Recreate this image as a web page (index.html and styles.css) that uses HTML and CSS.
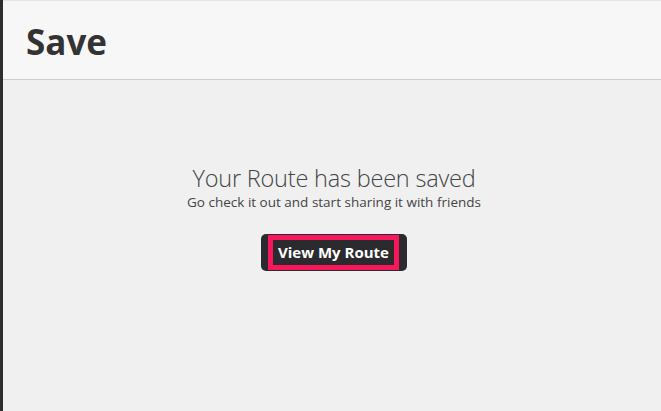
FILE: index.html
```html
<!DOCTYPE html>
<html lang="en">
<head>
    <meta charset="UTF-8">
    <meta name="viewport" content="width=device-width, initial-scale=1.0">
    <title>Save</title>
    <link rel="stylesheet" href="styles.css">
</head>
<body>

<div class="edge"></div>

<div class="panel">
    <header class="panel-header">
        <h1>Save</h1>
    </header>

    <main class="panel-body">
        <h2>Your Route has been saved</h2>
        <p>Go check it out and start sharing it with friends</p>

        <button class="route-btn"><span>View My Route</span></button>
    </main>
</div>

</body>
</html>
```

FILE: styles.css
```css
* {
    margin: 0;
    padding: 0;
    box-sizing: border-box;
}

body {
    font-family: 'Open Sans', sans-serif;
    background-color: #f0f0f0;
    color: #333;
    display: flex;
    height: 100vh;
    overflow: hidden;
}

.edge {
    width: 3px;
    background-color: #2f2e2c;
}

.panel {
    flex: 1;
    display: flex;
    flex-direction: column;
    border-top: 1px solid #e4e4ea;
}

.panel-header {
    height: 79px;
    background-color: #f7f7f7;
    border-bottom: 1px solid #cdcdcd;
    padding: 17px 0 0 23px;
}

h1 {
    font-size: 35px;
    font-weight: 700;
    line-height: 48px;
    color: #333;
}

.panel-body {
    flex: 1;
    text-align: center;
    padding: 84px 0 0 4px;
    color: #444;
}

h2 {
    font-size: 23.5px;
    font-weight: 300;
    line-height: 28px;
    letter-spacing: -0.2px;
}

p {
    font-size: 13.5px;
    line-height: 16px;
    margin-top: 2px;
}

.route-btn {
    margin-top: 24px;
    background-color: #2b2a2f;
    border: none;
    border-radius: 5px;
    padding: 1px 8px 1px 7px;
    cursor: pointer;
}

.route-btn span {
    display: block;
    border: 5px solid #f7175a;
    padding: 0 5px;
    font-family: 'Open Sans', sans-serif;
    font-size: 15px;
    font-weight: 700;
    line-height: 25px;
    color: #fff;
}
```
